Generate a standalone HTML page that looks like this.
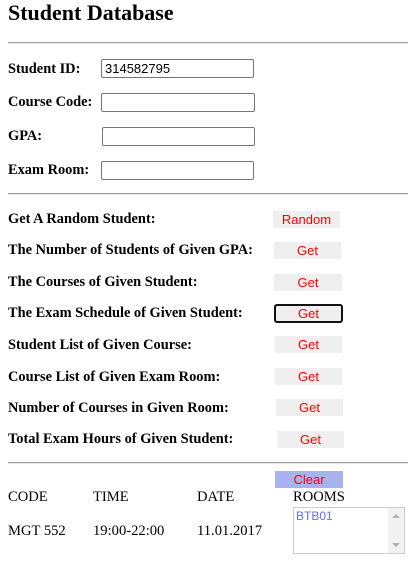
<!DOCTYPE html>
<html><head><style>
body{margin:0;width:408px;height:562px;position:relative;background:#fff;font-family:"Liberation Serif",serif;overflow:hidden}
.a{position:absolute;white-space:nowrap}
.t{font-weight:bold;font-size:22px;left:8px;top:0px}
.hr{position:absolute;left:8px;right:0;height:0;border-top:1px solid #a0a0a0;border-bottom:1px solid #e6e6e6}
.l{font-weight:bold;font-size:14.4px;left:8px;line-height:16px}
.in{position:absolute;border:1px solid #767676;border-radius:2px;box-sizing:border-box;height:19px;font:13px "Liberation Sans",sans-serif;padding:1px 3px;line-height:15px}
.b{position:absolute;background:#efefef;color:#f00;font:13px "Liberation Sans",sans-serif;text-align:center;line-height:17px;height:17px}
.n{font-size:14.6px;line-height:16px}
</style></head><body>
<div class="a t">Student Database</div>
<div class="hr" style="top:42px"></div>
<div class="a l" style="top:61px">Student ID:</div>
<div class="in" style="left:101px;top:59px;width:153px">314582795</div>
<div class="a l" style="top:94px">Course Code:</div>
<div class="in" style="left:101px;top:93px;width:154px"></div>
<div class="a l" style="top:128px">GPA:</div>
<div class="in" style="left:102px;top:127px;width:153px"></div>
<div class="a l" style="top:162px">Exam Room:</div>
<div class="in" style="left:101px;top:161px;width:153px"></div>
<div class="hr" style="top:193px"></div>
<div class="a l" style="top:211px">Get A Random Student:</div>
<div class="b" style="left:273px;top:211px;width:67px">Random</div>
<div class="a l" style="top:242px">The Number of Students of Given GPA:</div>
<div class="b" style="left:274px;top:242px;width:67px">Get</div>
<div class="a l" style="top:274px">The Courses of Given Student:</div>
<div class="b" style="left:274px;top:274px;width:68px">Get</div>
<div class="a l" style="top:305px">The Exam Schedule of Given Student:</div>
<div class="b" style="left:274px;top:304px;width:69px;height:19px;box-sizing:border-box;border:2px solid #111;border-radius:3px;line-height:15px">Get</div>
<div class="a l" style="top:337px">Student List of Given Course:</div>
<div class="b" style="left:275px;top:336px;width:67px">Get</div>
<div class="a l" style="top:369px">Course List of Given Exam Room:</div>
<div class="b" style="left:275px;top:368px;width:67px">Get</div>
<div class="a l" style="top:400px">Number of Courses in Given Room:</div>
<div class="b" style="left:276px;top:399px;width:67px">Get</div>
<div class="a l" style="top:431px">Total Exam Hours of Given Student:</div>
<div class="b" style="left:277px;top:431px;width:67px">Get</div>
<div class="hr" style="top:462px"></div>
<div class="b" style="left:275px;top:471px;width:68px;background:#a6b3ee">Clear</div>
<div class="a n" style="left:8px;top:489px">CODE</div>
<div class="a n" style="left:93px;top:489px">TIME</div>
<div class="a n" style="left:197px;top:489px">DATE</div>
<div class="a n" style="left:293px;top:489px">ROOMS</div>
<div class="a n" style="left:8px;top:523px">MGT 552</div>
<div class="a n" style="left:93px;top:523px">19:00-22:00</div>
<div class="a n" style="left:197px;top:523px">11.01.2017</div>
<div style="position:absolute;left:293px;top:507px;width:112px;height:47px;box-sizing:border-box;border:1px solid #ccc;font:12px 'Liberation Sans',sans-serif;color:#6a6aff;padding:1px 2px">BTB01
<div style="position:absolute;right:0;top:0;width:16px;height:45px;background:#f1f1f1"><div style="position:absolute;left:4px;top:6px;border:4px solid transparent;border-bottom:4px solid #b0b0b0;border-top:0"></div><div style="position:absolute;left:4px;bottom:6px;border:4px solid transparent;border-top:4px solid #b0b0b0;border-bottom:0"></div></div></div>
</body></html>
